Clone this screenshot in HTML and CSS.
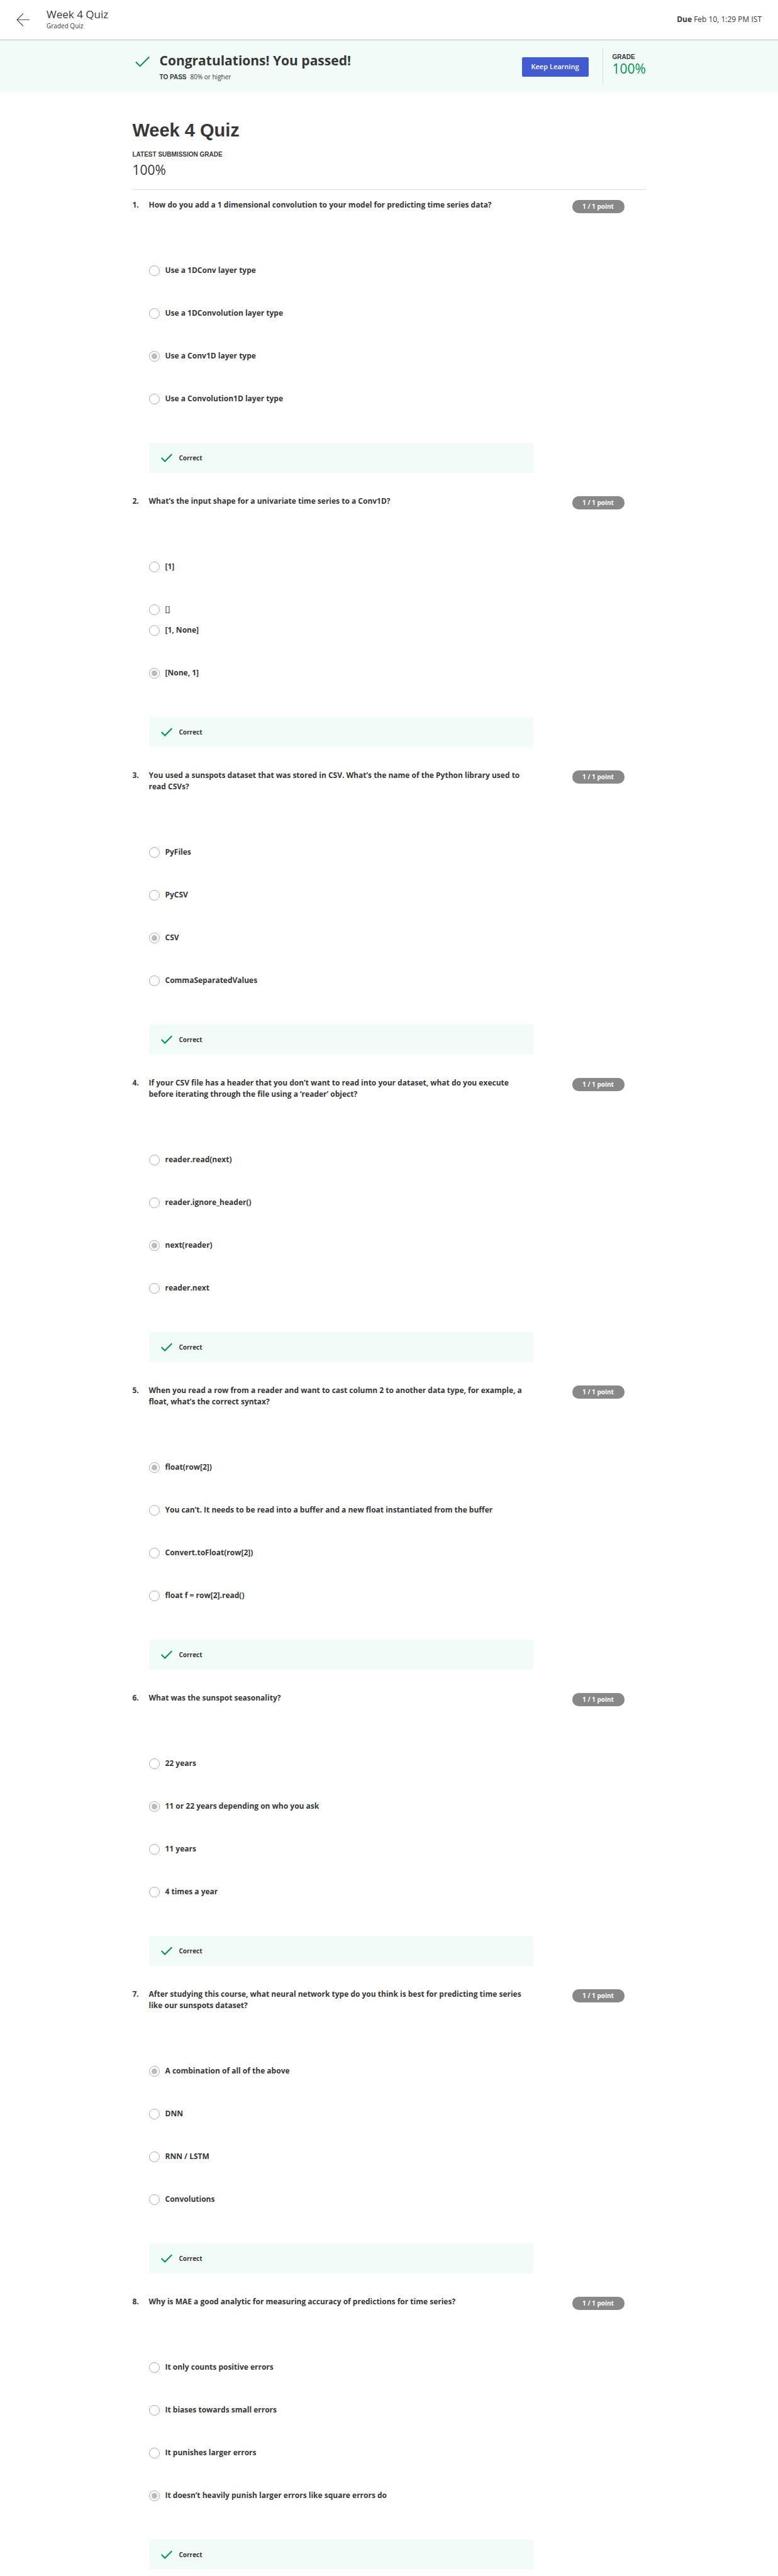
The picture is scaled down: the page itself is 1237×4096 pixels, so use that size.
FILE: index.html
```html
<!DOCTYPE html>
<html lang="en">
<head>
<meta charset="utf-8">
<title>Week 4 Quiz</title>
<link rel="stylesheet" href="styles.css">
</head>
<body>
<header class="topbar">
  <a class="back" href="#" aria-label="Back"><svg width="21" height="21" viewBox="0 0 21 21" fill="none" stroke="#52525f" stroke-width="1.200"><path d="M21 10.500H1M11 .5l-10 10 10 10"/></svg></a>
  <div class="topbar-title"><div class="item-name">Week 4 Quiz</div><div class="item-type">Graded Quiz</div></div>
  <div class="due"><strong>Due</strong> Feb 10, 1:29 PM IST</div>
</header>
<section class="banner">
  <div class="banner-inner">
    <svg class="pass-check" width="23" height="18" viewBox="0 0 23 18" fill="none" stroke="#01944f" stroke-width="2"><path d="M1 9.500L7.700 16.200 22.300 1.500"/></svg>
    <div class="pass-text"><h2>Congratulations! You passed!</h2><p><b class="caps">TO PASS</b><span>80% or higher</span></p></div>
    <button class="keep" type="button">Keep Learning</button>
    <div class="grade"><b class="caps">GRADE</b><span class="score passed">100%</span></div>
  </div>
</section>
<main class="quiz">
  <div class="quiz-head">
    <h1>Week 4 Quiz</h1>
    <div class="caps">LATEST SUBMISSION GRADE</div>
    <div class="score latest">100%</div>
  </div>
  <div id="questions"></div>
</main>
<script src="quiz.js"></script>
</body>
</html>
```
FILE: styles.css
```css
* { box-sizing: border-box; }
body { margin: 0; background: #fff; color: #373737; font: 12px/18px "Open Sans", "Noto Sans", sans-serif; }
h1, h2, p { margin: 0; }
.caps { font: bold 10px/15px "Liberation Sans", Arial, sans-serif; }
.topbar { display: flex; align-items: center; height: 64px; padding: 0 26px; border-bottom: 1px solid #bbb; }
.back { display: flex; width: 48px; }
.topbar-title { flex: 1; padding-bottom: 2px; }
.item-name { font-size: 17px; line-height: 22px; }
.item-type { font-size: 10px; line-height: 15px; }
.due { padding-bottom: 2px; }
.banner { background: #f1fbf8; }
.banner-inner { display: flex; align-items: center; max-width: 816px; height: 84px; margin: 0 auto; padding-left: 4px; }
.pass-check { margin: 0 16px 16px 0; }
.pass-text { flex: 1; }
.pass-text h2 { font-size: 21px; line-height: 26px; }
.pass-text p { display: flex; gap: 6px; margin-top: 6px; font-size: 10px; line-height: 15px; }
.keep { height: 31px; padding: 0 15px; border: 0; border-radius: 2px; background: #425bd0; color: #fff; font: 600 11px/18px "Open Sans", "Noto Sans", sans-serif; }
.grade { display: flex; flex-direction: column; width: 69px; height: 60px; margin-left: 22px; padding: 7px 0 0 15px; border-left: 1px solid #ddd; }
.score { font-size: 21px; line-height: 28px; }
.passed { color: #01944f; line-height: 22px; }
.latest { margin-top: 3px; }
.quiz { max-width: 816px; margin: 0 auto; padding-top: 39px; }
.quiz-head { padding-bottom: 17px; border-bottom: 1px solid #ddd; }
h1 { margin-bottom: 11px; font: bold 29px/40px "Liberation Sans", Arial, sans-serif; }
#questions { padding: 15px 0 0; }
.question { display: grid; grid-template-columns: 26px minmax(0, 611px) 83px; justify-content: start; padding-bottom: 36px; font-weight: bold; }
.question:last-child { padding-bottom: 8px; }
.badge { grid-column: 3; grid-row: 1 / span 2; justify-self: end; width: 83px; height: 21px; margin-top: 1px; border-radius: 10px; background: #888; color: #fff; font-size: 10px; line-height: 21px; text-align: center; }
.question { grid-template-columns: 26px minmax(0, 611px) minmax(83px, 145px); }
.answers { grid-column: 2; grid-row: 2; margin-top: 86px; }
.option { display: flex; align-items: center; height: 18px; margin-bottom: 50px; }
.option.plain { margin-bottom: 15px; font-weight: normal; }
.option input { appearance: none; flex: none; width: 17px; height: 17px; margin: 1px 9px 0 0; border: 1px solid #aaa; border-radius: 50%; background: #fff; }
.option input:checked { background: radial-gradient(circle, #bbb 4px, #fff 5px); }
.feedback { display: flex; align-items: center; gap: 11px; height: 48px; margin-top: 61px; padding-left: 19px; background: #f1fbf8; font-size: 10px; }
```
FILE: quiz.js
```js
const questions = [
  ["How do you add a 1 dimensional convolution to your model for predicting time series data?", ["Use a 1DConv layer type", "Use a 1DConvolution layer type", "Use a Conv1D layer type", "Use a Convolution1D layer type"], 2],
  ["What’s the input shape for a univariate time series to a Conv1D?", ["[1]", "[]", "[1, None]", "[None, 1]"], 3],
  ["You used a sunspots dataset that was stored in CSV. What’s the name of the Python library used to read CSVs?", ["PyFiles", "PyCSV", "CSV", "CommaSeparatedValues"], 2],
  ["If your CSV file has a header that you don’t want to read into your dataset, what do you execute before iterating through the file using a ‘reader’ object?", ["reader.read(next)", "reader.ignore_header()", "next(reader)", "reader.next"], 2],
  ["When you read a row from a reader and want to cast column 2 to another data type, for example, a float, what’s the correct syntax?", ["float(row[2])", "You can’t. It needs to be read into a buffer and a new float instantiated from the buffer", "Convert.toFloat(row[2])", "float f = row[2].read()"], 0],
  ["What was the sunspot seasonality?", ["22 years", "11 or 22 years depending on who you ask", "11 years", "4 times a year"], 1],
  ["After studying this course, what neural network type do you think is best for predicting time series like our sunspots dataset?", ["A combination of all of the above", "DNN", "RNN / LSTM", "Convolutions"], 0],
  ["Why is MAE a good analytic for measuring accuracy of predictions for time series?", ["It only counts positive errors", "It biases towards small errors", "It punishes larger errors", "It doesn’t heavily punish larger errors like square errors do"], 3]
];
const check = '<svg width="18" height="14" viewBox="0 0 18 14" fill="none" stroke="#01944f" stroke-width="2"><path d="M.7 7L6.200 12.500 17.300 1.200"/></svg>';
document.getElementById("questions").innerHTML = questions.map(([prompt, options, chosen], q) => `
  <section class="question">
    <div>${q + 1}.</div>
    <div class="prompt">${prompt}</div>
    <div class="badge">1 / 1 point</div>
    <div class="answers" role="radiogroup">
      ${options.map((text, i) => `<label class="option${text === "[]" ? " plain" : ""}"><input type="radio" name="q${q}"${i === chosen ? " checked" : ""}><span>${text}</span></label>`).join("")}
      <div class="feedback">${check}<span>Correct</span></div>
    </div>
  </section>`).join("");
```
